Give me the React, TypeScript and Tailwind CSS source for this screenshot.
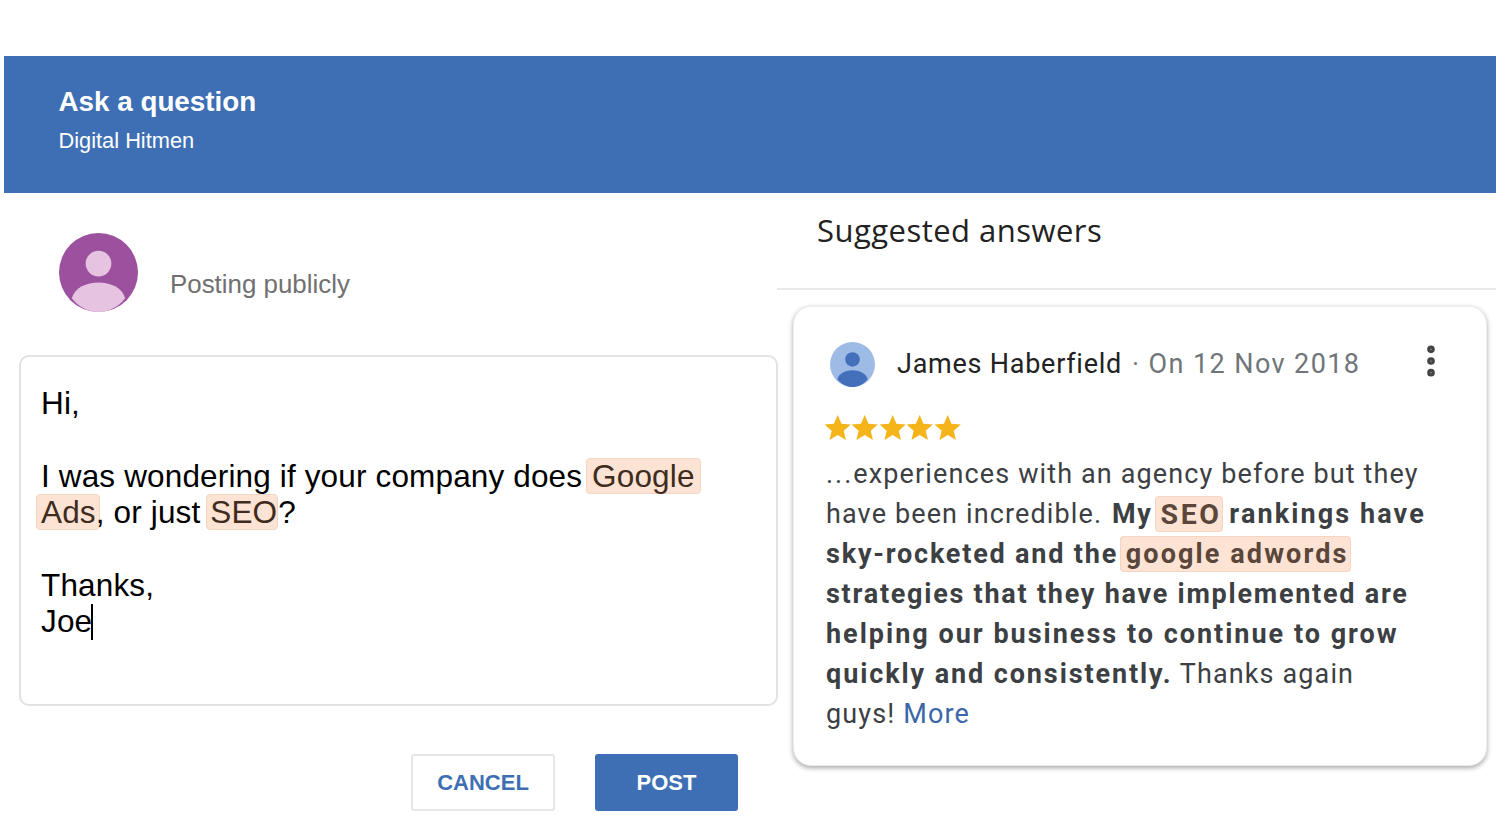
import { MoreVertical } from 'lucide-react';

const sans = 'font-["Liberation_Sans",sans-serif]';

function Chip({ children, className = '' }: { children: string; className?: string }) {
  return (
    <span className={`rounded-[4px] border border-[#f3d5c2] bg-[#fde3d3] ${className}`}>
      {children}
    </span>
  );
}

function PersonAvatar({ bg, fg, className }: { bg: string; fg: string; className: string }) {
  return (
    <svg viewBox="0 0 80 80" className={className}>
      <circle cx="40" cy="40" r="40" fill={bg} />
      <circle cx="40" cy="31" r="13" fill={fg} />
      <path d="M13 66c3-11 15-16 27-16s24 5 27 16c-7 9-17 14-27 14S20 75 13 66z" fill={fg} />
    </svg>
  );
}

function Star() {
  return (
    <svg viewBox="0 0 24 24" className="h-[27.4px] w-[27.4px]">
      <path d="M12 .9l3.3 7.6 8.2.7-6.2 5.4 1.9 8.1L12 18.4l-7.2 4.3 1.9-8.1L.5 9.2l8.2-.7z" fill="#f4b41a" />
    </svg>
  );
}

function QuestionForm() {
  return (
    <div className="w-[773px] shrink-0">
      <div className="flex h-[162px] pl-[55px] pt-[40px]">
        <PersonAvatar bg="#9c519f" fg="#e6c3e0" className="h-[79px] w-[79px]" />
        <span className="ml-[32px] mt-[36px] text-[25.9px] leading-[30px] text-[#707070]">Posting publicly</span>
      </div>
      <div className="ml-[15px] h-[351px] w-[759px] rounded-[10px] border-2 border-[#e2e2e2] pl-[20px] pt-[28px] text-[31.5px] leading-[36.4px] tracking-[0.15px] text-black">
        <p>Hi,</p>
        <p className="mt-[36.4px]">
          I was wondering if your company does{' '}
          <Chip className="-ml-[5px] inline-block px-[5px] leading-[34px] text-[#3e2c20]">Google</Chip>
        </p>
        <p>
          <Chip className="-ml-[5px] -mr-[4px] inline-block pl-[4px] pr-[3px] leading-[34px] text-[#3e2c20]">Ads</Chip>, or just{' '}
          <Chip className="-ml-[3px] inline-block pl-[3px] pr-0 leading-[34px] text-[#3e2c20]">SEO</Chip>?
        </p>
        <p className="mt-[36.4px]">Thanks,</p>
        <p className="flex items-center">
          Joe<span className="-ml-px h-[36px] w-[2px] bg-black" />
        </p>
      </div>
      <div className="ml-[407px] mt-[48px] flex gap-[40px] text-[22px] font-bold">
        <button className="h-[57px] w-[144px] rounded-[3px] border-2 border-[#e6e6e6] text-[#3e6fb3]">CANCEL</button>
        <button className="h-[57px] w-[143px] rounded-[3px] bg-[#3e6fb5] text-white">POST</button>
      </div>
    </div>
  );
}

function SuggestedAnswers() {
  return (
    <div className="min-w-0 flex-1">
      <h2 className="h-[97px] border-b-2 border-[#e9e9e9] pl-[40px] pt-[17px] font-['Open_Sans',sans-serif] text-[31px] leading-[40px] tracking-[0.47px] text-[#222]">
        Suggested answers
      </h2>
      <div className="ml-[16px] mt-[16px] h-[460px] w-[694px] rounded-[18px] border border-[#ececec] bg-white pl-[32px] pt-[35px] shadow-[0_2px_5px_rgba(0,0,0,0.35)] font-['Roboto',sans-serif]">
        <div className="flex items-center">
          <PersonAvatar bg="#9dbbe5" fg="#4470bb" className="ml-[4px] h-[45px] w-[45px]" />
          <span className="ml-[22px] text-[27px] tracking-[0.75px] text-[#222]">James Haberfield</span>
          <span className="ml-[10px] text-[27px] tracking-[1.4px] text-[#70757a]">· On 12 Nov 2018</span>
          <MoreVertical className="ml-[51px] -mt-[8px] h-[40px] w-[40px] text-[#444]" strokeWidth={2.6} />
        </div>
        <div className="-ml-[2px] mt-[27px] flex">
          {[0, 1, 2, 3, 4].map((i) => (
            <Star key={i} />
          ))}
        </div>
        <p className="mt-[14px] text-[27px] leading-[39.9px] tracking-[1.13px] text-[#3c4043]">
          <span className="tracking-[2px]">...</span>experiences with an agency before but they<br />
          have been incredible. <b className="ml-[2px] tracking-[1.7px]">My</b>{' '}
          <Chip className="-ml-[6px] py-[0.5px] pl-[5px] pr-0 text-[28.5px] leading-[30px] font-bold tracking-[2.6px] text-[#5a463a]">SEO</Chip>{' '}
          <b className="-ml-px tracking-[2.1px]">rankings have</b><br />
          <b className="tracking-[1.8px]">sky-rocketed and the</b>{' '}
          <Chip className="-ml-[6px] py-[1px] pl-[5px] pr-[2px] font-bold tracking-[2.1px] text-[#5a463a]">google adwords</Chip><br />
          <b className="tracking-[1.75px]">strategies that they have implemented are</b><br />
          <b className="tracking-[2px]">helping our business to continue to grow</b><br />
          <b className="tracking-[1.9px]">quickly and consistently.</b> Thanks again<br />
          guys! <span className="text-[#3c66a8]">More</span>
        </p>
      </div>
    </div>
  );
}

export default function App() {
  return (
    <div className={`h-[820px] w-[1500px] overflow-hidden bg-white pl-[4px] pt-[56px] ${sans}`}>
      <header className="h-[137px] w-[1492px] bg-[#3e6fb5] pl-[54.5px] pt-[28px] text-white">
        <h1 className="text-[27.8px] font-bold leading-[36px]">Ask a question</h1>
        <p className="mt-[7px] text-[21.8px] leading-[28px]">Digital Hitmen</p>
      </header>
      <div className="flex w-[1492px]">
        <QuestionForm />
        <SuggestedAnswers />
      </div>
    </div>
  );
}
